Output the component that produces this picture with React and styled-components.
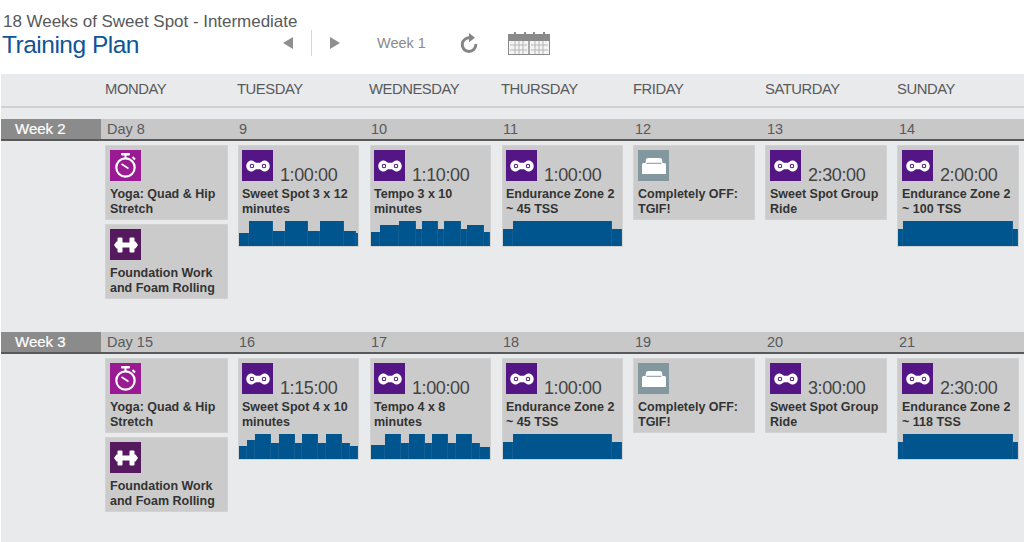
import React from "react";
import styled, { createGlobalStyle } from "styled-components";

const GlobalStyle = createGlobalStyle`
  html, body {
    margin: 0;
    padding: 0;
    background: #fff;
    font-family: "Liberation Sans", Arial, sans-serif;
  }
`;

const Page = styled.div`
  width: 1024px;
  height: 542px;
  overflow: hidden;
`;

const Header = styled.header`
  display: flex;
  height: 74px;
  background: #fff;
  box-sizing: border-box;
  padding: 12px 0 0 3px;
`;

const TitleBlock = styled.div`
  width: 280px;
`;

const PlanName = styled.div`
  font-size: 17px;
  line-height: 19px;
  letter-spacing: -0.03px;
  color: #58595b;
  white-space: nowrap;
`;

const PageTitle = styled.h1`
  margin: 0 0 0 -1px;
  font-size: 24.5px;
  font-weight: normal;
  line-height: 28px;
  letter-spacing: -0.5px;
  color: #0f5596;
`;

const Nav = styled.div`
  display: flex;
  align-items: center;
  height: 26px;
  margin-top: 18px;
`;

const ArrowButton = styled.svg`
  width: 10px;
  height: 12px;
  fill: #8f8f8f;
  flex: none;
`;

const NavDivider = styled.div`
  width: 1px;
  height: 26px;
  background: #d6d6d6;
  margin: 0 18px;
`;

const WeekLabel = styled.span`
  margin: 0 34px 0 37px;
  font-size: 14.5px;
  color: #8a8a8a;
  white-space: nowrap;
`;

const CalendarIcon = styled.svg`
  width: 42px;
  height: 23px;
  margin-left: 30px;
  flex: none;
`;

const Board = styled.main`
  height: 468px;
  margin-left: 1px;
  background: #e9eaec;
`;

const DayHeader = styled.div`
  display: grid;
  grid-template-columns: repeat(7, 132px);
  height: 34px;
  box-sizing: border-box;
  padding: 0 0 2px 104px;
  align-items: center;
  border-bottom: 2px solid #d0d1d3;
`;

const DayName = styled.div`
  font-size: 14.8px;
  letter-spacing: -0.45px;
  color: #58595b;
`;

const WeekSection = styled.section`
  height: 213px;
  box-sizing: border-box;
  padding-top: 11px;
`;

const WeekBar = styled.div`
  display: flex;
  height: 22px;
  box-sizing: border-box;
  background: #c8c8c8;
  border-bottom: 2px solid #58595b;
`;

const WeekBadge = styled.div`
  width: 100px;
  margin-right: 6px;
  padding-left: 14px;
  box-sizing: border-box;
  flex: none;
  background: #8b8b8b;
  color: #fff;
  font-size: 15px;
  line-height: 19px;
  -webkit-text-stroke: 0.2px #fff;
`;

const DateRow = styled.div`
  display: grid;
  grid-template-columns: repeat(7, 132px);
`;

const DateCell = styled.div`
  font-size: 14.5px;
  line-height: 20px;
  color: #58595b;
`;

const CardGrid = styled.div`
  display: grid;
  grid-template-columns: repeat(7, 132px);
  padding: 4px 0 0 104px;
  align-items: start;
`;

const DayColumn = styled.div`
  display: flex;
  flex-direction: column;
  gap: 4px;
  width: ${(props) => props.$width}px;
  margin-left: ${(props) => props.$shift}px;
`;

const Card = styled.div`
  height: ${(props) => (props.$withChart ? 102 : 75)}px;
  box-sizing: border-box;
  padding: 5px 0 0 ${(props) => 5 - props.$shift}px;
  background: #cbcbcb;
  box-shadow: inset 0 0 0 1px #d2d2d2;
  position: relative;
`;

const IconRow = styled.div`
  display: flex;
  align-items: flex-end;
  height: 31px;
`;

const IconTile = styled.div`
  width: 31px;
  height: 31px;
  flex: none;
  display: flex;
  align-items: center;
  justify-content: center;
  background: ${(props) => props.$color};
`;

const Duration = styled.span`
  margin-left: 7px;
  font-size: 18px;
  line-height: 11px;
  letter-spacing: -0.4px;
  color: #444;
`;

const CardTitle = styled.div`
  margin-top: 6px;
  font-size: 12.5px;
  font-weight: bold;
  line-height: 15px;
  color: #333;
  white-space: pre-line;
`;

const Chart = styled.div`
  position: absolute;
  left: 1px;
  right: 1px;
  bottom: 1px;
  height: 25px;
  display: flex;
  align-items: flex-end;
`;

const ChartBar = styled.div`
  flex: ${(props) => props.$size} 1 0;
  height: ${(props) => props.$height}px;
  background: #00558f;
  box-shadow: inset -1px 0 0 #135f94;
`;

const icons = {
  yoga: "#9a1a94",
  strength: "#551a5e",
  ride: "#541685",
  off: "#83979e",
};

// left edge and width differ a little from one weekday to the next
const columnShapes = [
  { shift: 0, width: 123 },
  { shift: 1, width: 121 },
  { shift: 1, width: 121 },
  { shift: 1, width: 121 },
  { shift: 0, width: 122 },
  { shift: 0, width: 122 },
  { shift: 0, width: 122 },
];

function TileGraphic({ kind }) {
  if (kind === "yoga") {
    return (
      <svg width="21" height="25" viewBox="0 0 21 25" fill="none">
        <rect x="6" y="0" width="9" height="2.4" rx="1" fill="#fff" />
        <rect x="9.5" y="2" width="2" height="3" fill="#fff" />
        <circle cx="10.5" cy="14.5" r="9.2" stroke="#fff" strokeWidth="2.2" />
        <path d="M6.5 11L13.5 15.5" stroke="#fff" strokeWidth="1.5" />
        <path d="M17.5 4L20 6.5" stroke="#fff" strokeWidth="2" />
      </svg>
    );
  }
  if (kind === "strength") {
    return (
      <svg width="24" height="16" viewBox="0 0 24 16" fill="#fff">
        <path d="M0 8L2.5 4.5H3.5V1.5Q3.5 0.5 4.5 0.5H7.5Q8.5 0.5 8.5 1.5V5.5H15.5V1.5Q15.5 0.5 16.5 0.5H19.5Q20.5 0.5 20.5 1.5V4.5H21.5L24 8L21.5 11.5H20.5V14.5Q20.5 15.5 19.5 15.5H16.5Q15.5 15.5 15.5 14.5V10.5H8.5V14.5Q8.5 15.5 7.5 15.5H4.5Q3.5 15.5 3.5 14.5V11.5H2.5Z" />
      </svg>
    );
  }
  if (kind === "off") {
    return (
      <svg width="24" height="16" viewBox="0 0 24 16" fill="#fff">
        <path d="M3.5 5L4 1.5Q4.2 0 6 0H18Q19.8 0 20 1.5L20.5 5H22.5Q24 5 24 6.5V16H0V6.5Q0 5 1.5 5Z" />
        <rect x="4.5" y="4.8" width="15" height="1" fill="#83979e" />
      </svg>
    );
  }
  return (
    <svg width="26" height="12" viewBox="0 0 26 13">
      <path
        d="M6 0.5C8.2 0.5 9.5 2.6 11 3H15C16.5 2.6 17.8 0.5 20 0.5C23.4 0.5 25.7 3.2 25.7 6.5C25.7 9.8 23.4 12.5 20 12.5C17.8 12.5 16.5 10.4 15 10H11C9.5 10.4 8.2 12.5 6 12.5C2.6 12.5 0.3 9.8 0.3 6.5C0.3 3.2 2.6 0.5 6 0.5Z"
        fill="#fff"
      />
      <circle cx="6.5" cy="6.5" r="1.9" fill="#fff" stroke="#541685" strokeWidth="1.1" />
      <circle cx="19.5" cy="6.5" r="1.9" fill="#fff" stroke="#541685" strokeWidth="1.1" />
    </svg>
  );
}

const yogaCard = { kind: "yoga", title: "Yoga: Quad & Hip\nStretch" };
const strengthCard = {
  kind: "strength",
  title: "Foundation Work\nand Foam Rolling",
};
const offCard = { kind: "off", title: "Completely OFF:\nTGIF!" };

const flatChart = [
  [10, 17],
  [99, 25],
  [10, 17],
];
const flatChartWide = [
  [5, 17],
  [110, 25],
  [5, 17],
];

const weeks = [
  {
    label: "Week 2",
    dates: ["Day 8", "9", "10", "11", "12", "13", "14"],
    days: [
      [yogaCard, strengthCard],
      [
        {
          kind: "ride",
          time: "1:00:00",
          title: "Sweet Spot 3 x 12\nminutes",
          chart: [
            [10, 13],
            [24, 25],
            [12, 15],
            [24, 25],
            [12, 15],
            [24, 25],
            [12, 15],
            [2, 13],
          ],
        },
      ],
      [
        {
          kind: "ride",
          time: "1:10:00",
          title: "Tempo 3 x 10\nminutes",
          chart: [
            [9, 14],
            [19, 21],
            [17, 25],
            [6, 17],
            [17, 25],
            [6, 17],
            [17, 25],
            [6, 17],
            [17, 21],
            [6, 14],
          ],
        },
      ],
      [
        {
          kind: "ride",
          time: "1:00:00",
          title: "Endurance Zone 2\n~ 45 TSS",
          chart: flatChart,
        },
      ],
      [offCard],
      [{ kind: "ride", time: "2:30:00", title: "Sweet Spot Group\nRide" }],
      [
        {
          kind: "ride",
          time: "2:00:00",
          title: "Endurance Zone 2\n~ 100 TSS",
          chart: flatChartWide,
        },
      ],
    ],
  },
  {
    label: "Week 3",
    dates: ["Day 15", "16", "17", "18", "19", "20", "21"],
    days: [
      [yogaCard, strengthCard],
      [
        {
          kind: "ride",
          time: "1:15:00",
          title: "Sweet Spot 4 x 10\nminutes",
          chart: [
            [8, 13],
            [8, 19],
            [16, 25],
            [8, 16],
            [16, 25],
            [8, 16],
            [16, 25],
            [8, 16],
            [16, 25],
            [8, 16],
            [8, 13],
          ],
        },
      ],
      [
        {
          kind: "ride",
          time: "1:00:00",
          title: "Tempo 4 x 8\nminutes",
          chart: [
            [14, 14],
            [16, 25],
            [8, 16],
            [16, 25],
            [8, 16],
            [16, 25],
            [8, 16],
            [16, 25],
            [8, 16],
            [10, 12],
          ],
        },
      ],
      [
        {
          kind: "ride",
          time: "1:00:00",
          title: "Endurance Zone 2\n~ 45 TSS",
          chart: flatChart,
        },
      ],
      [offCard],
      [{ kind: "ride", time: "3:00:00", title: "Sweet Spot Group\nRide" }],
      [
        {
          kind: "ride",
          time: "2:30:00",
          title: "Endurance Zone 2\n~ 118 TSS",
          chart: flatChartWide,
        },
      ],
    ],
  },
];

const dayNames = [
  "MONDAY",
  "TUESDAY",
  "WEDNESDAY",
  "THURSDAY",
  "FRIDAY",
  "SATURDAY",
  "SUNDAY",
];

function WorkoutCard({ card, shift }) {
  return (
    <Card $withChart={!!card.chart} $shift={shift}>
      <IconRow>
        <IconTile $color={icons[card.kind]}>
          <TileGraphic kind={card.kind} />
        </IconTile>
        {card.time && <Duration>{card.time}</Duration>}
      </IconRow>
      <CardTitle>{card.title}</CardTitle>
      {card.chart && (
        <Chart>
          {card.chart.map(([size, height], i) => (
            <ChartBar key={i} $size={size} $height={height} />
          ))}
        </Chart>
      )}
    </Card>
  );
}

function App() {
  return (
    <Page>
      <GlobalStyle />
      <Header>
        <TitleBlock>
          <PlanName>18 Weeks of Sweet Spot - Intermediate</PlanName>
          <PageTitle>Training Plan</PageTitle>
        </TitleBlock>
        <Nav>
          <ArrowButton viewBox="0 0 10 12">
            <path d="M10 0V12L0 6Z" />
          </ArrowButton>
          <NavDivider />
          <ArrowButton viewBox="0 0 10 12">
            <path d="M0 0V12L10 6Z" />
          </ArrowButton>
          <WeekLabel>Week 1</WeekLabel>
          <svg width="18" height="20" viewBox="0 0 18 20" fill="none">
            <path
              d="M10.5 5A6.8 6.8 0 1 0 15.8 11"
              stroke="#858585"
              strokeWidth="3"
            />
            <path d="M9 0L15 4.8L9 9.2Z" fill="#858585" />
          </svg>
          <CalendarIcon viewBox="0 0 42 23">
            <rect x="0" y="2" width="42" height="7" fill="#8a8a8a" />
            <rect x="6" y="0" width="2" height="3" fill="#8a8a8a" />
            <rect x="16" y="0" width="2" height="3" fill="#8a8a8a" />
            <rect x="25" y="0" width="2" height="3" fill="#8a8a8a" />
            <rect x="35" y="0" width="2" height="3" fill="#8a8a8a" />
            <rect
              x="0.5"
              y="8.5"
              width="41"
              height="14"
              fill="#f4f4f4"
              stroke="#8a8a8a"
            />
            <path d="M21 8V23" stroke="#8a8a8a" strokeWidth="1.4" />
            <path
              d="M2 13H19M2 18H19M23 13H40M23 18H40M7 9V22M11 9V22M15 9V22M27 9V22M31 9V22M35 9V22"
              stroke="#b5b5b5"
              strokeWidth="1"
            />
          </CalendarIcon>
        </Nav>
      </Header>
      <Board>
        <DayHeader>
          {dayNames.map((name) => (
            <DayName key={name}>{name}</DayName>
          ))}
        </DayHeader>
        {weeks.map((week) => (
          <WeekSection key={week.label}>
            <WeekBar>
              <WeekBadge>{week.label}</WeekBadge>
              <DateRow>
                {week.dates.map((date) => (
                  <DateCell key={date}>{date}</DateCell>
                ))}
              </DateRow>
            </WeekBar>
            <CardGrid>
              {week.days.map((cards, i) => (
                <DayColumn
                  key={i}
                  $shift={columnShapes[i].shift}
                  $width={columnShapes[i].width}
                >
                  {cards.map((card) => (
                    <WorkoutCard
                      key={card.title}
                      card={card}
                      shift={columnShapes[i].shift}
                    />
                  ))}
                </DayColumn>
              ))}
            </CardGrid>
          </WeekSection>
        ))}
      </Board>
    </Page>
  );
}

export default App;
